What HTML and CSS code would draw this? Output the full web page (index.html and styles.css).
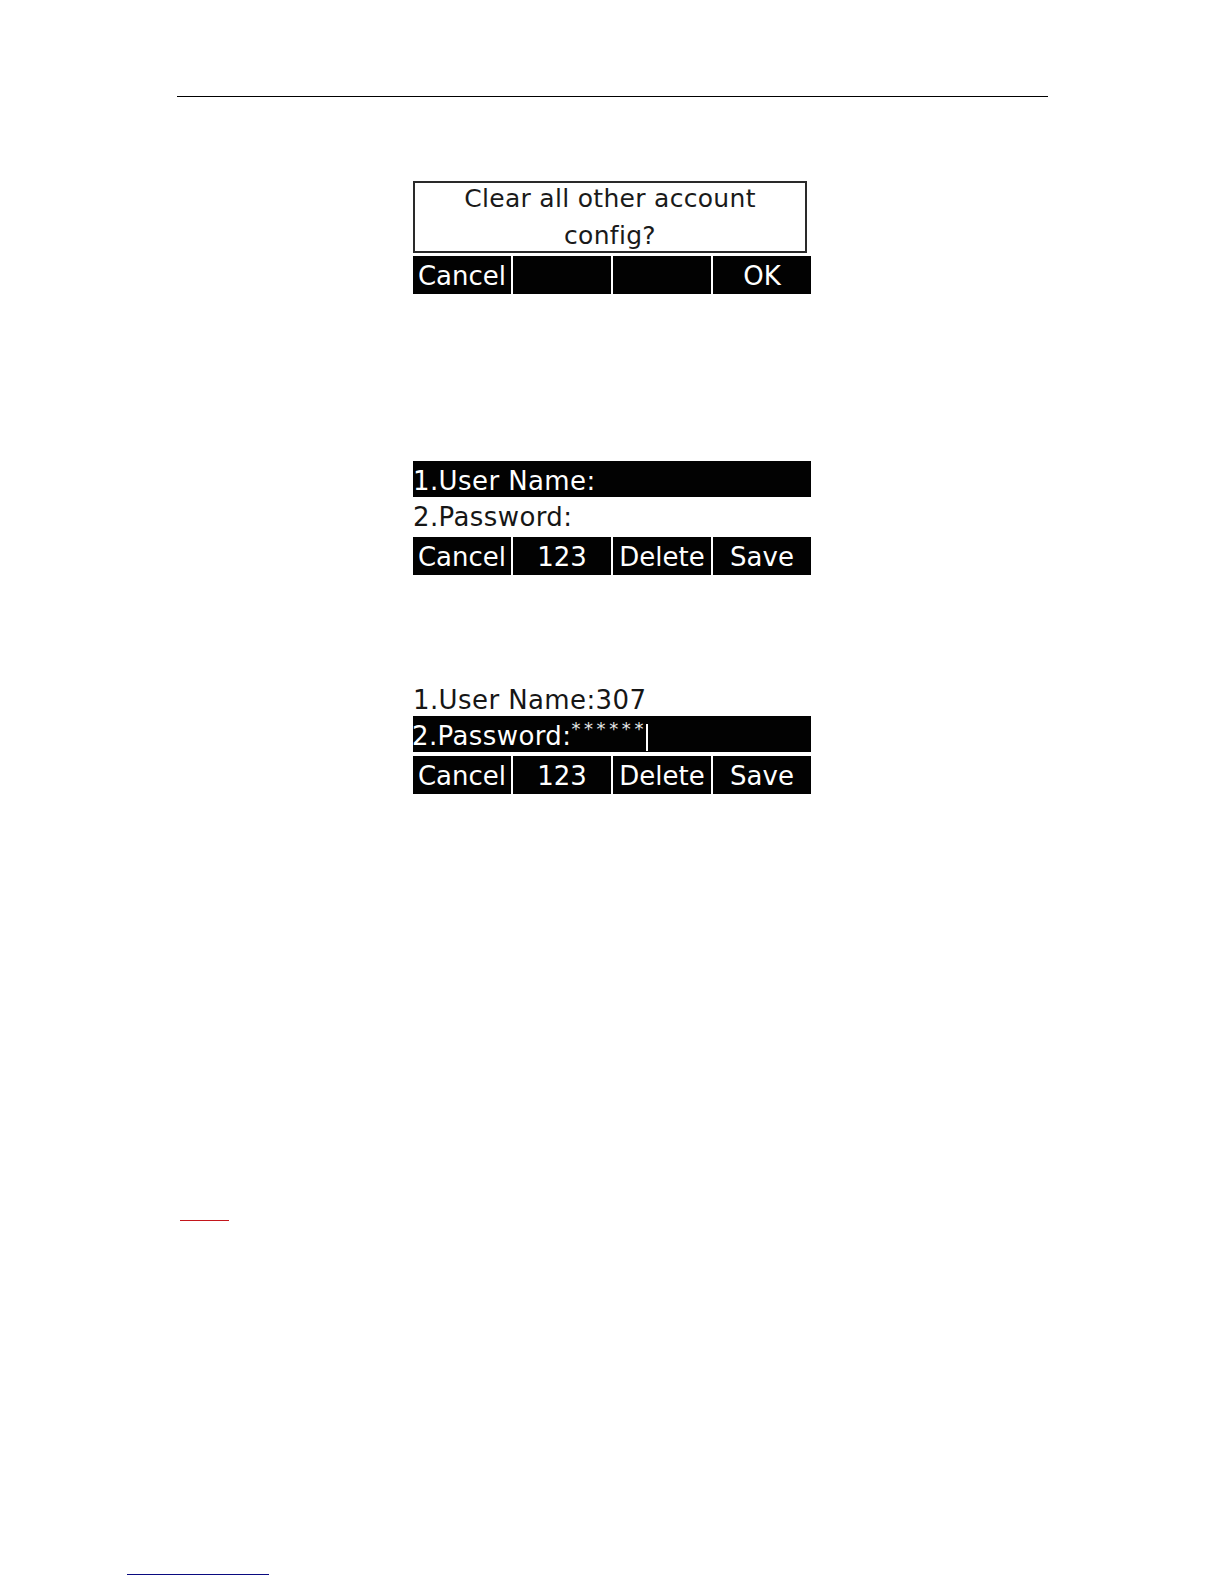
FILE: index.html
```html
<!DOCTYPE html>
<html lang="en">
<head>
<meta charset="utf-8">
<title>Phone LCD screens</title>
<link rel="stylesheet" href="styles.css">
</head>
<body>
<div class="page">
  <div class="rule"></div>

  <div class="screen screen-confirm">
    <div class="dialog"><div class="dialog-text">Clear all other account<br>config?</div></div>
    <div class="softkeys">
      <div class="sk">Cancel</div>
      <div class="sk"></div>
      <div class="sk"></div>
      <div class="sk">OK</div>
    </div>
  </div>

  <div class="screen screen-empty">
    <div class="row row-sel">1.User Name:</div>
    <div class="row">2.Password:</div>
    <div class="softkeys">
      <div class="sk">Cancel</div>
      <div class="sk">123</div>
      <div class="sk">Delete</div>
      <div class="sk">Save</div>
    </div>
  </div>

  <div class="screen screen-filled">
    <div class="row">1.User Name:307</div>
    <div class="row row-sel row-cut">2.Password:<span class="mask">******</span><span class="cursor"></span></div>
    <div class="softkeys">
      <div class="sk">Cancel</div>
      <div class="sk">123</div>
      <div class="sk">Delete</div>
      <div class="sk">Save</div>
    </div>
  </div>

  <div class="link-red"></div>
  <div class="link-blue"></div>
</div>
</body>
</html>
```

FILE: styles.css
```css
html, body {
  margin: 0;
  padding: 0;
  background: #ffffff;
}

body {
  font-family: "DejaVu Sans", "Liberation Sans", sans-serif;
  color: #111111;
}

.page {
  width: 1224px;
  height: 1584px;
  padding-top: 96px;
  box-sizing: border-box;
  display: flex;
  flex-direction: column;
  overflow: hidden;
}

.rule {
  margin-left: 177px;
  width: 871px;
  height: 0;
  border-top: 1px solid #000000;
}

.screen {
  margin-left: 413px;
  width: 398px;
  display: flex;
  flex-direction: column;
}

.screen-confirm {
  margin-top: 84px;
}

.screen-empty {
  margin-top: 167px;
}

.screen-filled {
  margin-top: 105px;
}

.dialog {
  width: 394px;
  height: 72px;
  box-sizing: border-box;
  border: 2px solid #2a2a2a;
  text-align: center;
  font-size: 25px;
  line-height: 37px;
  letter-spacing: 0.3px;
  color: #1a1a1a;
}

.dialog-text {
  margin-top: -3px;
}

.row {
  height: 36px;
  box-sizing: border-box;
  padding-top: 4px;
  line-height: 32px;
  font-size: 26px;
  letter-spacing: 0.4px;
  white-space: nowrap;
  overflow: hidden;
  color: #161616;
}

.row-sel {
  background: #020202;
  color: #ffffff;
}

.row-cut {
  text-indent: -1px;
}

.mask {
  display: inline-block;
  vertical-align: top;
  font-size: 18px;
  line-height: 22px;
  letter-spacing: 3.6px;
  margin-left: 1px;
  margin-top: -2px;
  color: #e6e6e6;
}

.cursor {
  display: inline-block;
  vertical-align: top;
  width: 2px;
  height: 27px;
  margin-top: 4px;
  margin-left: -1px;
  background: #ffffff;
}

.softkeys {
  display: flex;
  gap: 2px;
  height: 38px;
  margin-top: 4px;
}

.screen-confirm .softkeys {
  margin-top: 3px;
}

.sk {
  flex: 1;
  background: #020202;
  color: #ffffff;
  font-size: 26px;
  line-height: 35px;
  padding-top: 3px;
  text-align: center;
  white-space: nowrap;
  overflow: hidden;
}

.link-red {
  margin-top: 426px;
  margin-left: 180px;
  width: 49px;
  height: 0;
  border-top: 1px solid #c4161c;
}

.link-blue {
  margin-top: 353px;
  margin-left: 127px;
  width: 142px;
  height: 0;
  border-top: 1px solid #0a0a80;
}
```
